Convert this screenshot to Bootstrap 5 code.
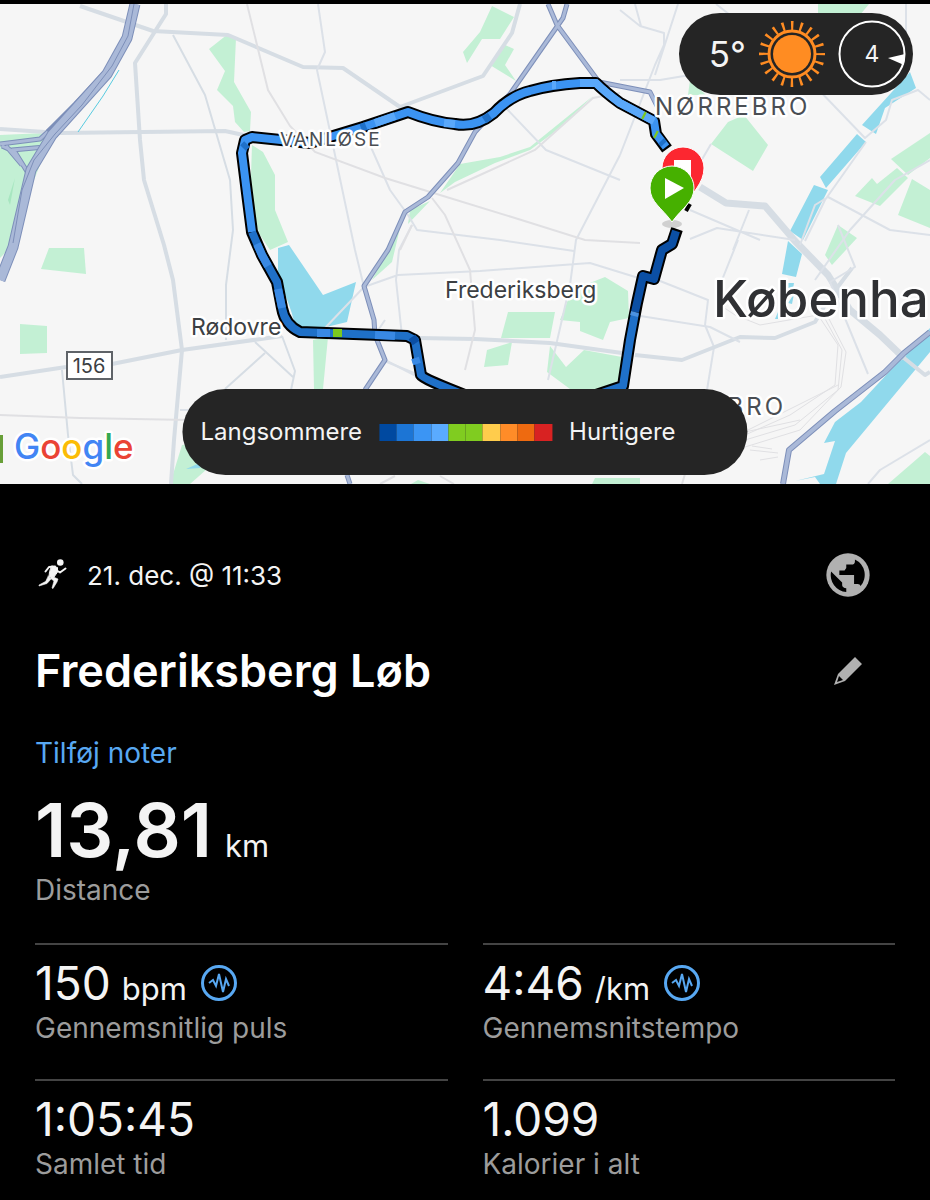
<!DOCTYPE html>
<html lang="da" data-bs-theme="dark">
<head>
<meta charset="utf-8">
<meta name="viewport" content="width=device-width, initial-scale=1">
<title>Frederiksberg Løb</title>
<link href="https://cdn.jsdelivr.net/npm/bootstrap@5.3.0/dist/css/bootstrap.min.css" rel="stylesheet">
<style>
  body { background: #000; color: #f4f4f4; font-family: Inter, "Liberation Sans", sans-serif; }
  .map { display: block; width: 100%; height: auto; }
  .road { fill: none; stroke: #d6dde4; stroke-linejoin: round; }
  .street { stroke: #dce1e8; stroke-width: 2; }
  .rail { fill: none; stroke: #e0e0e3; stroke-width: 2; }
  .mw-edge { fill: none; stroke: #7d8fb9; stroke-linejoin: round; }
  .mw { fill: none; stroke: #aab9d8; stroke-linejoin: round; }
  .park { fill: #c3f0d4; }
  .water { fill: #90d9ec; }
  .route { fill: none; stroke-linejoin: round; }
  .place { font-family: Inter, sans-serif; fill: #3c4043; stroke: #fff; stroke-width: 5; stroke-linejoin: round; paint-order: stroke; }
  .district { letter-spacing: 3px; fill: #4a4e54; }
  .district-sm { letter-spacing: 2px; }
  .pill { background: #252525; }
  .weather { top: 9px; right: 17px; height: 82px; padding: 0 7px 0 30px; gap: 11px; font-size: 35px; }
  .legend { bottom: 9px; height: 86px; padding: 0 72px 0 18px; gap: 17px; font-size: 24px; white-space: nowrap; }
  .scale { width: 173px; height: 17px; }
  .scale span { flex: 1; }
  .details { padding: 65px 35px 16px; }
  .date-row { margin-bottom: 42px; }
  .date { font-size: 26px; line-height: 32px; gap: 16px; }
  .date span { padding-top: 2px; }
  .icon-btn { width: 94px; color: #b0b0b0; line-height: 0; }
  .title { font-size: 45px; line-height: 56px; font-weight: 600; }
  .notes-row { margin-top: 36px; }
  .notes { color: #58a8f2; font-size: 28px; line-height: 36px; }
  .big { font-size: 74px; line-height: 74px; font-weight: 600; margin: 22px 0 7px; gap: 13px; }
  .unit { font-size: 31px; line-height: 32px; font-weight: 400; }
  .value .unit { margin: 0 14px 0 11px; }
  .value { font-size: 46px; line-height: 58px; }
  .caption { font-size: 28px; line-height: 32px; color: #9c9c9c; }
  .distance { margin-bottom: 37px; }
  .stats { --bs-gutter-x: 35px; }
  .stat { border-top: 2px solid #444; padding-top: 9px; height: 136px; }
</style>
</head>
<body>
<header class="position-relative pt-1">
<svg class="map" viewBox="0 4 930 480" role="img" aria-label="Kort over ruten">
  <rect y="4" width="930" height="480" fill="#f6f6f6"/>
  <g class="park">
    <path d="M0 135L45 133L48 145L20 215L10 248L0 258ZM209 49L228 34L236 38L234 82L251 112L250 131L244 132L235 122L233 106L217 90L225 71ZM252 145L263 152L275 175L275 210L288 242L270 250L260 235L250 205Z"/>
    <path d="M49 248L84 248L86 274L41 269ZM20 324L47 326V353L20 354ZM492 6L514 17L500 39H482L467 63L463 52L480 32ZM503 44L514 49L505 65L516 81L490 65ZM460 164L500 157L530 147L593 96L560 128L530 150L495 163L455 182L440 193ZM410 210L430 201L408 224ZM400 228L392 262L372 280L388 250Z"/>
    <path d="M508 312H555L550 338H501ZM487 350L512 342L508 365L484 367ZM560 320L572 290L605 277L628 291L629 318L610 322L603 340L580 331L580 322ZM550 346L566 367L584 350L622 357L622 375L610 389H570L547 372ZM313 340L328 337L323 389H314ZM818 4H869L860 15H818ZM728 122L744 115L768 145L753 171L711 144ZM690 80L706 95L688 95ZM891 159L930 133V158L908 175ZM872 178L877 184L897 168L908 178L880 206L855 196ZM912 179L930 190V228L898 215ZM838 225L857 238L832 265L825 255ZM182 445L240 440L190 484H170ZM595 478H640V484H592ZM888 484L925 452L930 456V484ZM411 484L418 480L430 484Z"/>
  </g>
  <path d="M8 200L15 178L10 205Z" fill="#a7e6c0"/>
  <g class="water">
    <path d="M278 248L289 245L323 295L356 282L347 322L314 330L295 325Q289 300 278 280ZM910 72L916 88L885 108L876 134L862 125ZM857 134L866 142L826 188L820 177ZM814 185L828 190L803 240L790 231ZM788 241L802 254L796 277L782 274ZM788 283H794L793 289H788ZM794 294L792 304L788 303ZM778 312V319H775Z"/>
    <path d="M186 469L202 462L200 468ZM930 328V352L846 453L836 484H820L815 477L795 481L824 474L835 441L824 443L835 422L861 402Z"/>
  </g>
  <g class="road" stroke-width="3">
    <path stroke-width="4" d="M80 6L153 31L228 35L303 67L343 68L400 107L483 76L512 33L520 4"/>
    <path stroke-width="4" d="M166 4V14L135 63L140 140L144 180L164 245L173 280L182 350L174 440L171 484"/>
    <path stroke-width="4" d="M0 129L60 133L225 131L248 136"/><path stroke-width="4" d="M0 377L66 367M112 364L182 350L282 336"/>
    <path stroke-width="2" d="M173 35L205 95L230 180L233 230L226 285V340M62 370L68 435L73 475L82 484M282 336L295 371L291 390M255 342L293 377M265 353L225 389"/>
    <path class="street" d="M318 4L325 52L317 70L335 155L355 250L364 287M370 145L390 190L408 215L417 230L500 240L574 251M506 108L546 150L620 180M620 155L576 240L570 285L548 380M325 328L364 287L398 275L480 271L590 263L645 280M402 336L396 280L399 250L412 225M645 275L708 300L705 325L714 347L707 390M738 240L720 285M375 335L385 320M385 360L420 378"/>
    <path stroke-width="4" d="M418 338L475 339L550 343L622 353M635 355L682 360L740 337L775 338L815 322L828 300L852 268"/>
    <path stroke-width="7" d="M700 187L726 203L765 206L795 241L828 275L850 310L880 335L904 358"/>
    <path stroke-width="4" d="M904 358L925 375L930 372"/>
    <path class="street" d="M620 10L640 26L664 33V45L655 65L620 155M620 80L660 80L690 75M635 4L641 26M678 4L655 75M716 4L730 15M814 85L865 138L886 120L892 100L918 90L930 100M906 4V70M866 142L825 200L805 241M800 245L815 205L828 197L890 230L930 235M930 160L895 180L850 230L815 280M711 144L690 180M690 210L760 240M690 239L717 228L795 240M749 210L733 250M838 225L855 267L830 282L868 374M634 315L710 327L740 342M930 440L880 470L868 484M180 410H195M382 360L414 373"/>
  </g>
  <g class="rail">
    <path d="M247 4L268 90L290 126L315 152L385 178L440 195L515 218L585 240L640 243M432 198L445 215L470 270L475 330L465 370M447 190L480 175L535 150L593 98L620 93M400 250L412 225M0 415L80 418L190 420"/>
    <path stroke-width="1" d="M720 305L735 315L760 325L818 315L838 345L835 385L790 415L745 435M823 315L842 350L838 390L795 425L745 440M828 317L846 352L841 387L800 430L745 447M748 430L838 385M745 432L800 420M750 450L778 453M752 446L772 449M760 460L778 457"/>
    <path d="M380 484L395 476M440 476L454 484M682 484L685 474"/>
  </g>
  <path d="M119 70L103 96L78 132" fill="none" stroke="#58cbe0"/>
  <g>
    <path class="mw-edge" stroke-width="5" d="M0 144L40 139L52 128M12 150L45 147M2 146L15 152L28 173L20 220M6 146L22 165"/>
    <path class="mw" stroke-width="3" d="M0 144L40 139L52 128M12 150L45 147M2 146L15 152L28 173L20 220M6 146L22 165"/>
    <path class="mw-edge" stroke-width="3" d="M47 131L75 103L105 71M56 136L80 105"/>
    <path class="mw-edge" stroke-width="11" d="M135 4L127 38L107 74L52 135L31 170L13 247L0 280"/>
    <path class="mw" stroke-width="9" d="M135 4L127 38L107 74L52 135L31 170L13 247L0 280"/>
    <path class="mw-edge" stroke-width="1" d="M13 243L22 190L34 160L55 134L82 105L112 66L128 36L134 4"/>
    <path class="mw-edge" stroke-width="5" d="M548 4L557 25L599 82L650 92L658 108M567 4L563 18L510 94L475 132L458 163L428 197L405 212L388 250L364 286L374 320L375 335L385 360L365 390M347 475L350 484"/>
    <path class="mw" stroke-width="3" d="M548 4L557 25L599 82L650 92L658 108M567 4L563 18L510 94L475 132L458 163L428 197L405 212L388 250L364 286L374 320L375 335L385 360L365 390M347 475L350 484"/>
    <path class="mw-edge" stroke-width="6" d="M930 332L904 353L885 372L835 411L789 450L783 484"/>
    <path class="mw" stroke-width="4" d="M930 332L904 353L885 372L835 411L789 450L783 484"/>
  </g>
  <g class="route">
    <path stroke="#000" stroke-width="12" d="M667 149L656 134L654 121L620 103Q605 92 596 83L580 83Q550 85 530 91Q510 96 494 113Q475 128 455 124Q433 122 408 112L363 127L310 143L252 137L245 140L242 153L247 193L252 232L262 255L277 282L282 308Q285 325 300 332L407 336L415 340L421 375Q423 379 470 397H590L623 386L630 340L637 303L643 276L654 279L662 250L672 244L677 229"/>
    <path stroke="#000" stroke-width="4" d="M686 211L690 204"/>
    <path stroke="#3b93f2" stroke-width="8" d="M666 147L656 134L654 121L620 103Q605 92 596 83L580 83Q550 85 530 91Q510 96 494 113Q475 128 455 124Q433 122 408 112L363 127L310 143L252 137L245 140L242 153L247 193L252 232"/>
    <path stroke="#5aa8fa" stroke-width="8" d="M654 121L620 103Q605 92 596 83H580M556 85H552M395 116L375 123M444 123L455 124"/>
    <path stroke="#1f70c8" stroke-width="8" d="M252 232L262 255L277 282L282 308Q285 325 300 332L407 336L415 340L421 375Q423 379 470 397H590L623 386L630 340L635 313M366 126L361 128M490 116L484 120M664 144L661 141M247 144L243 148"/>
    <path stroke="#3989e4" stroke-width="8" d="M257 244L262 255L268 266M278 289L282 308M317 333L330 333M375 335L395 336M415 358L417 364"/>
    <path stroke="#0b4fa4" stroke-width="8" d="M635 312L637 303L643 276L654 279L662 250L672 244L676 231M412 337L416 343"/>
    <path stroke="#4b92e0" stroke-width="8" d="M634 316L635 312"/>
    <path stroke="#7cc81f" stroke-width="8" d="M333 333H342M643 115L645 116M655 134L657 135"/>
  </g>
  <ellipse cx="672" cy="224" rx="10" ry="4" fill="#999" opacity=".4"/>
  <path d="M683 147A21 21 0 0 1 704 168C704 183 692 193 683 208C674 193 662 183 662 168A21 21 0 0 1 683 147Z" fill="#fc2730" stroke="#fff" stroke-width="1"/>
  <path d="M674 160H691V177H674Z" fill="#fff"/>
  <path d="M672 166A22 22 0 0 1 694 188C694 202 682 208 672 222C662 208 650 202 650 188A22 22 0 0 1 672 166Z" fill="#46b000" stroke="#fff" stroke-width="1"/>
  <path d="M665 178L684 188L665 199Z" fill="#fff"/>
  <g class="place">
    <text class="district district-sm" x="280" y="146" font-size="19">VANLØSE</text>
    <text class="district" x="655" y="115" font-size="24">NØRREBRO</text>
    <text class="district" x="786" y="415" font-size="24" text-anchor="end">VESTERBRO</text>
    <text x="445" y="298" font-size="23">Frederiksberg</text>
    <text x="191" y="335" font-size="23">Rødovre</text>
    <text x="713" y="317" font-size="51" font-weight="500" fill="#303134">Københa</text>
    <text x="14" y="459" font-size="35" font-weight="500"><tspan fill="#4285f4">G</tspan><tspan fill="#ea4335">o</tspan><tspan fill="#fbbc05">o</tspan><tspan fill="#4285f4">g</tspan><tspan fill="#34a853">l</tspan><tspan fill="#ea4335">e</tspan></text>
  </g>
  <rect x="67" y="352" width="45" height="27" fill="#fff" stroke="#5f6368" stroke-width="2"/>
  <text x="89" y="373" font-size="20" text-anchor="middle" fill="#3c4043">156</text>
  <path d="M0 435H3V463H0Z" fill="#689f38"/>
</svg>

<div class="pill weather rounded-pill position-absolute d-flex align-items-center mt-1">
  <span>5°</span>
  <svg width="70" height="70" viewBox="-35 -35 70 70" fill="none" stroke="#ff8c22" aria-hidden="true">
    <circle r="19" fill="#ff8c22" stroke="none"/>
    <circle r="23" stroke-width="3"/>
    <circle r="28.5" stroke-width="9" stroke-dasharray="2.4 6.553" stroke-dashoffset="1.2"/>
  </svg>
  <svg width="68" height="68" viewBox="-34 -34 68 68" aria-hidden="true">
    <circle r="32.5" fill="none" stroke="#fff" stroke-width="2"/>
    <path d="M16 4L33 0L32 11Z" fill="#fff"/>
    <text y="8" font-size="23" text-anchor="middle" fill="#f4f4f4">4</text>
  </svg>
</div>

<div class="pill legend rounded-pill position-absolute start-50 translate-middle-x d-flex align-items-center">
  <span>Langsommere</span>
  <div class="scale d-flex">
    <span style="background:#0049a0"></span><span style="background:#1c75d5"></span><span style="background:#3b95f4"></span><span style="background:#5aabff"></span><span style="background:#80cc20"></span><span style="background:#80cc20"></span><span style="background:#ffcc4c"></span><span style="background:#ff8c28"></span><span style="background:#ee6a10"></span><span style="background:#d82222"></span>
  </div>
  <span>Hurtigere</span>
</div>
</header>

<main class="details">
  <div class="date-row d-flex align-items-center justify-content-between">
    <div class="date d-flex align-items-center">
      <svg width="36" height="36" viewBox="0 0 36 36" fill="none" stroke="#f4f4f4" stroke-linejoin="round" stroke-linecap="round" aria-hidden="true">
        <circle cx="25.300" cy="5.500" r="3.300" fill="#f4f4f4" stroke="none"/>
        <path stroke-width="2" d="M20 9.500L14 10L10.500 14.500M21 13L25 15.500L30.500 11.500"/>
        <path d="M17 9L22.500 10.500L22.500 15L19 20L14 19.500L14.500 15Z" fill="#f4f4f4"/>
        <path d="M13.500 19L16 22L12 26.500L4 29L4 28L10.500 24.500Z" fill="#f4f4f4" stroke-width=".6"/>
        <path d="M16 19L23 22L22 25L18 31.500L17 31L19 24L15 21Z" fill="#f4f4f4" stroke-width=".6"/>
      </svg>
      <span>21. dec. @ 11:33</span>
    </div>
    <button type="button" class="icon-btn btn border-0 p-0" aria-label="Synlighed">
      <svg width="52" height="52" viewBox="0 0 24 24"><circle cx="12" cy="12" r="10" fill="currentColor"/><path fill="#000" d="M15.200 4.800V5.600Q15.200 7.200 13.600 7.200H11.200V8.800L10.400 9.900H8V12H14.800V16.100H16.500Q17.500 16.100 17.800 17.100A7.900 7.900 0 0 0 15.200 4.800ZM4.200 10.400L9.300 15.500V16.700Q9.500 17.900 11.200 18.100V19.900A7.900 7.900 0 0 1 4.200 10.400Z"/></svg>
    </button>
  </div>
  <div class="d-flex align-items-center justify-content-between">
    <h1 class="title m-0">Frederiksberg Løb</h1>
    <button type="button" class="icon-btn btn border-0 p-0" aria-label="Rediger">
      <svg width="30" height="30" viewBox="0 0 30 30"><path fill="currentColor" fill-rule="evenodd" d="M22 1L29 8L12 25L1 29L5 18ZM6 20L4 26L10 24Z"/></svg>
    </button>
  </div>
  <div class="notes-row"><a href="#" class="notes text-decoration-none d-inline-block align-top">Tilføj noter</a></div>
  <div class="big d-flex align-items-baseline"><span>13,81</span><span class="unit">km</span></div>
  <div class="caption distance">Distance</div>
  <div class="stats row">
    <div class="col-6"><div class="stat">
      <div class="value d-flex align-items-baseline">150<span class="unit">bpm</span>
        <svg class="align-self-center" width="36" height="36" viewBox="0 0 36 36" fill="none" stroke="#58a8f2" stroke-width="2" aria-hidden="true"><circle cx="18" cy="18" r="16.500" stroke-width="3"/><path d="M8 18L12 15L15 21L18 9L22 27L25 14L28 21"/></svg>
      </div>
      <div class="caption">Gennemsnitlig puls</div>
    </div></div>
    <div class="col-6"><div class="stat">
      <div class="value d-flex align-items-baseline">4:46<span class="unit">/km</span>
        <svg class="align-self-center" width="36" height="36" viewBox="0 0 36 36" fill="none" stroke="#58a8f2" stroke-width="2" aria-hidden="true"><circle cx="18" cy="18" r="16.500" stroke-width="3"/><path d="M8 18L12 15L15 21L18 9L22 27L25 14L28 21"/></svg>
      </div>
      <div class="caption">Gennemsnitstempo</div>
    </div></div>
    <div class="col-6"><div class="stat">
      <div class="value">1:05:45</div>
      <div class="caption">Samlet tid</div>
    </div></div>
    <div class="col-6"><div class="stat">
      <div class="value">1.099</div>
      <div class="caption">Kalorier i alt</div>
    </div></div>
  </div>
</main>
<script src="https://cdn.jsdelivr.net/npm/bootstrap@5.3.0/dist/js/bootstrap.bundle.min.js"></script>
</body>
</html>
